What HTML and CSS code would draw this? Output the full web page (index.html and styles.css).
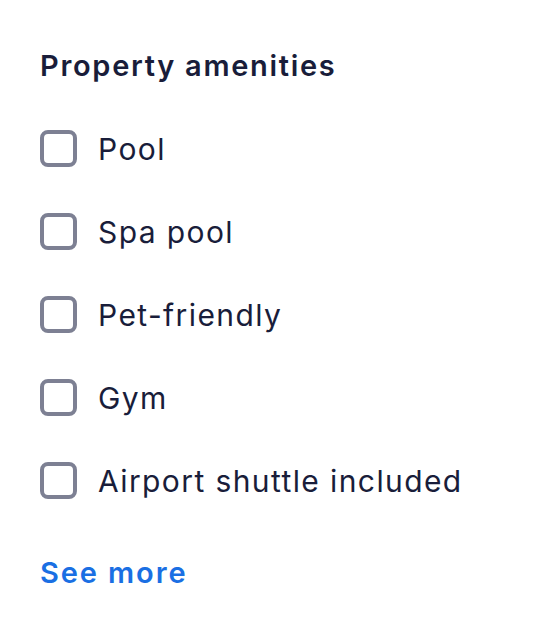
FILE: index.html
```html
<!DOCTYPE html>
<html lang="en">
<head>
<meta charset="utf-8">
<title>Property amenities</title>
<link rel="stylesheet" href="styles.css">
</head>
<body>
<section class="filter">
  <h2 class="filter-title">Property amenities</h2>
  <ul class="options">
    <li class="option"><label class="option-label"><input type="checkbox" class="check"><span class="option-text">Pool</span></label></li>
    <li class="option"><label class="option-label"><input type="checkbox" class="check"><span class="option-text">Spa pool</span></label></li>
    <li class="option"><label class="option-label"><input type="checkbox" class="check"><span class="option-text">Pet-friendly</span></label></li>
    <li class="option"><label class="option-label"><input type="checkbox" class="check"><span class="option-text">Gym</span></label></li>
    <li class="option"><label class="option-label"><input type="checkbox" class="check"><span class="option-text">Airport shuttle included</span></label></li>
  </ul>
  <a class="see-more" href="#">See more</a>
</section>
</body>
</html>
```

FILE: styles.css
```css
html, body {
  margin: 0;
  padding: 0;
  background: #ffffff;
}

body {
  font-family: "Inter", "Lato", sans-serif;
  color: #191d3a;
  font-variant-ligatures: none;
}

.filter {
  padding: 46px 40px 0 40px;
  display: flex;
  flex-direction: column;
  align-items: flex-start;
}

.filter-title {
  margin: 0;
  font-size: 29px;
  line-height: 40px;
  font-weight: 600;
  letter-spacing: 1.7px;
}

.options {
  list-style: none;
  margin: 21px 0 0 0;
  padding: 0;
  display: flex;
  flex-direction: column;
}

.option {
  height: 83px;
  display: flex;
  align-items: center;
}

.option-label {
  display: flex;
  align-items: center;
  gap: 21px;
  cursor: pointer;
}

.check {
  appearance: none;
  -webkit-appearance: none;
  margin: 0;
  width: 37px;
  height: 37px;
  box-sizing: border-box;
  border: 4px solid #7d8093;
  border-radius: 8px;
  background: #ffffff;
}

.option-text {
  font-size: 30px;
  line-height: 40px;
  font-weight: 400;
  letter-spacing: 1.4px;
}

.see-more {
  margin-top: 31px;
  font-size: 29px;
  line-height: 40px;
  font-weight: 600;
  letter-spacing: 1.9px;
  color: #1a6fe3;
  text-decoration: none;
}
```
